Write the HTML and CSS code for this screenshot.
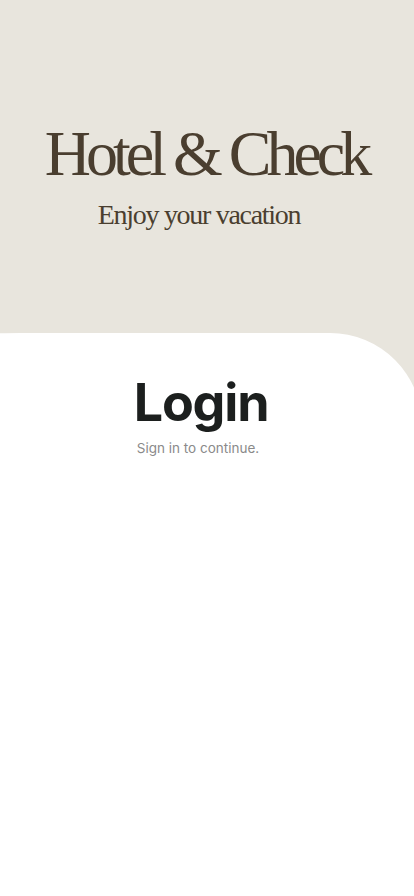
FILE: index.html
```html
<!DOCTYPE html>
<html lang="en">
<head>
<meta charset="utf-8">
<title>Hotel &amp; Check — Login</title>
<link rel="stylesheet" href="styles.css">
</head>
<body>
<div class="screen">
  <header class="hero">
    <h1 class="brand">Hotel &amp; Check</h1>
    <p class="tagline">Enjoy your vacation</p>
  </header>
  <main class="card">
    <h2 class="login-title">Login</h2>
    <p class="login-sub">Sign in to continue.</p>
  </main>
</div>
</body>
</html>
```
FILE: styles.css
```css
html, body {
  margin: 0;
  padding: 0;
}
body {
  background: #ffffff;
  overflow: hidden;
}
.screen {
  width: 414px;
  height: 896px;
  overflow: hidden;
  background: #e8e5dd;
  display: flex;
  flex-direction: column;
}
.hero {
  height: 333px;
  display: flex;
  flex-direction: column;
  align-items: center;
  box-sizing: border-box;
  padding-top: 118px;
}
.brand {
  margin: 0 0 0 -2px;
  font-family: "Liberation Serif", "DejaVu Serif", serif;
  font-weight: 400;
  font-size: 64px;
  line-height: 72px;
  letter-spacing: -5px;
  color: #4a3e2f;
  white-space: nowrap;
}
.tagline {
  margin: 8px 0 0 -16px;
  font-family: "Liberation Serif", "DejaVu Serif", serif;
  font-size: 28px;
  line-height: 34px;
  letter-spacing: -1.3px;
  color: #4a3e2f;
}
.card {
  flex: 1;
  margin-right: -8px;
  margin-left: -20px;
  background: #ffffff;
  border-top-right-radius: 92px;
  border-top-left-radius: 40px 2px;
  display: flex;
  flex-direction: column;
  align-items: center;
  padding: 40px 20px 0 20px;
}
.login-title {
  margin: 0;
  font-family: Inter, "Liberation Sans", sans-serif;
  font-weight: 700;
  font-size: 52px;
  line-height: 60px;
  letter-spacing: -1.2px;
  color: #1c1f1e;
}
.login-sub {
  margin: 6px 0 0 -6px;
  font-family: Inter, "Liberation Sans", sans-serif;
  font-size: 13.5px;
  line-height: 18px;
  color: #8a8a8a;
}
```
